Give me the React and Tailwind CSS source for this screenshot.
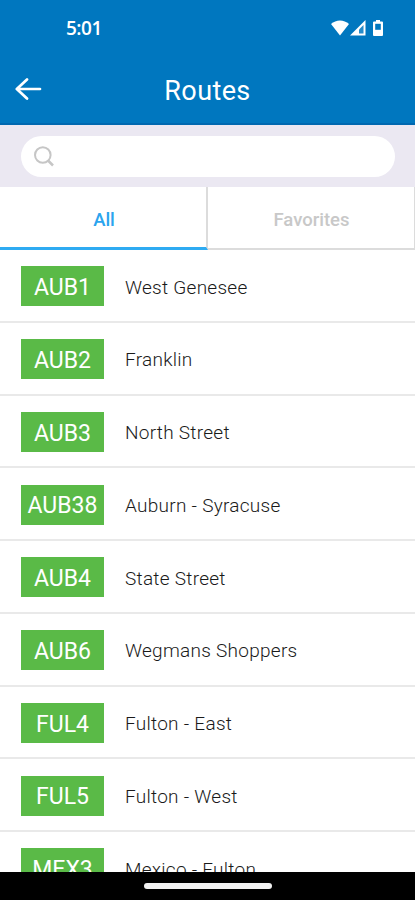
import React, { useState } from "react";

const routes = [
  { code: "AUB1", name: "West Genesee" },
  { code: "AUB2", name: "Franklin" },
  { code: "AUB3", name: "North Street" },
  { code: "AUB38", name: "Auburn - Syracuse" },
  { code: "AUB4", name: "State Street" },
  { code: "AUB6", name: "Wegmans Shoppers" },
  { code: "FUL4", name: "Fulton - East" },
  { code: "FUL5", name: "Fulton - West" },
  { code: "MEX3", name: "Mexico - Fulton" },
];

const StatusBar = () => (
  <div className="flex h-14 items-center justify-between pl-[66px] pr-8 text-white">
    <span className="font-['Open_Sans',sans-serif] text-[19px] font-semibold leading-none tracking-[-0.5px]">
      5:01
    </span>
    <div className="flex items-center">
      <svg width="18" height="16" viewBox="0 0 18 16" fill="currentColor">
        <path d="M0 4C5-.8 13-.8 18 4L9 15.500z" />
      </svg>
      <svg width="16" height="16" viewBox="0 0 16 16" className="ml-px">
        <path d="M15.500 0v15.500H0z" fill="currentColor" />
        <path d="M13.500 5v8.500H9V9.500z" fill="#0077bf" fillOpacity="0.85" />
      </svg>
      <svg width="10" height="16" viewBox="0 0 10 16" className="ml-[7px]">
        <path
          d="M3 0h4v1.500h2a1 1 0 0 1 1 1V15a1 1 0 0 1-1 1H1a1 1 0 0 1-1-1V2.500a1 1 0 0 1 1-1h2z"
          fill="currentColor"
        />
        <path d="M2.200 3.800h5.600v6H2.200z" fill="#0077bf" />
      </svg>
    </div>
  </div>
);

const Header = () => (
  <header className="h-[125px] shrink-0 border-b-2 border-[#0068b0] bg-[#0077bf]">
    <StatusBar />
    <div className="grid h-[67px] grid-cols-[80px_1fr_80px] items-center text-white">
      <button className="flex pb-0.5 pl-[15px]" aria-label="Back">
        <svg
          width="27"
          height="24"
          viewBox="0 0 27 24"
          fill="none"
          stroke="currentColor"
          strokeWidth="2.7"
          strokeLinecap="round"
          strokeLinejoin="round"
        >
          <path d="M12 2.500 1.800 12 12 21.500M2 12h23" />
        </svg>
      </button>
      <h1 className="pt-1 text-center text-[27px] tracking-[0.4px] leading-none">
        Routes
      </h1>
    </div>
  </header>
);

const SearchBar = () => (
  <div className="h-[62px] shrink-0 bg-[#ebe8f2] px-[21px] pt-[11px]">
    <div className="flex h-[41px] w-[374px] items-center rounded-full bg-white pl-[13px]">
      <svg
        width="20"
        height="21"
        viewBox="0 0 20 21"
        fill="none"
        stroke="#c6c6c6"
        strokeWidth="2"
      >
        <circle cx="8.800" cy="9" r="7.800" />
        <path d="m14 14.500 5 5" strokeWidth="2.500" />
      </svg>
    </div>
  </div>
);

const App = () => {
  const [tab, setTab] = useState("all");

  return (
    <div className="flex h-[900px] w-[415px] flex-col overflow-hidden bg-white font-[Roboto,sans-serif]">
      <Header />
      <SearchBar />

      {/* Tabs */}
      <div className="flex h-[63px] shrink-0 text-[18.5px] font-medium">
        <button
          onClick={() => setTab("all")}
          className={`w-52 border-r-2 border-r-[#dcdcdc] pl-0.5 pt-[7px] ${tab === "all" ? "border-b-[3px] border-b-[#2eabf2] text-[#2ba4ee]" : "border-b-2 border-b-[#dcdcdc] text-[#c8c8c8]"}`}
        >
          All
        </button>
        <button
          onClick={() => setTab("favorites")}
          className={`flex-1 border-r border-r-[#dcdcdc] pl-px pt-[7px] ${tab === "favorites" ? "border-b-[3px] border-b-[#2eabf2] text-[#2ba4ee]" : "border-b-2 border-b-[#dcdcdc] text-[#c8c8c8]"}`}
        >
          Favorites
        </button>
      </div>

      {/* Route list */}
      <div className="min-h-0 flex-1 overflow-hidden">
        {routes.map((route) => (
          <div
            key={route.code}
            className="flex h-[72.75px] items-center gap-[21px] border-b-2 border-[#e9e9e9] pl-[21px] pt-[2px]"
          >
            <div className="flex h-10 w-[83px] items-center justify-center bg-[#5aba47] pt-1 text-[23px] text-white">
              {route.code}
            </div>
            <span className="pt-[3px] text-[19px] font-light tracking-[0.27px] text-[#1a1a1a]">
              {route.name}
            </span>
          </div>
        ))}
      </div>

      {/* Gesture bar */}
      <div className="flex h-7 shrink-0 items-center justify-center bg-black">
        <div className="h-1.5 w-32 rounded-full bg-[#f2f2f2]" />
      </div>
    </div>
  );
};

export default App;
